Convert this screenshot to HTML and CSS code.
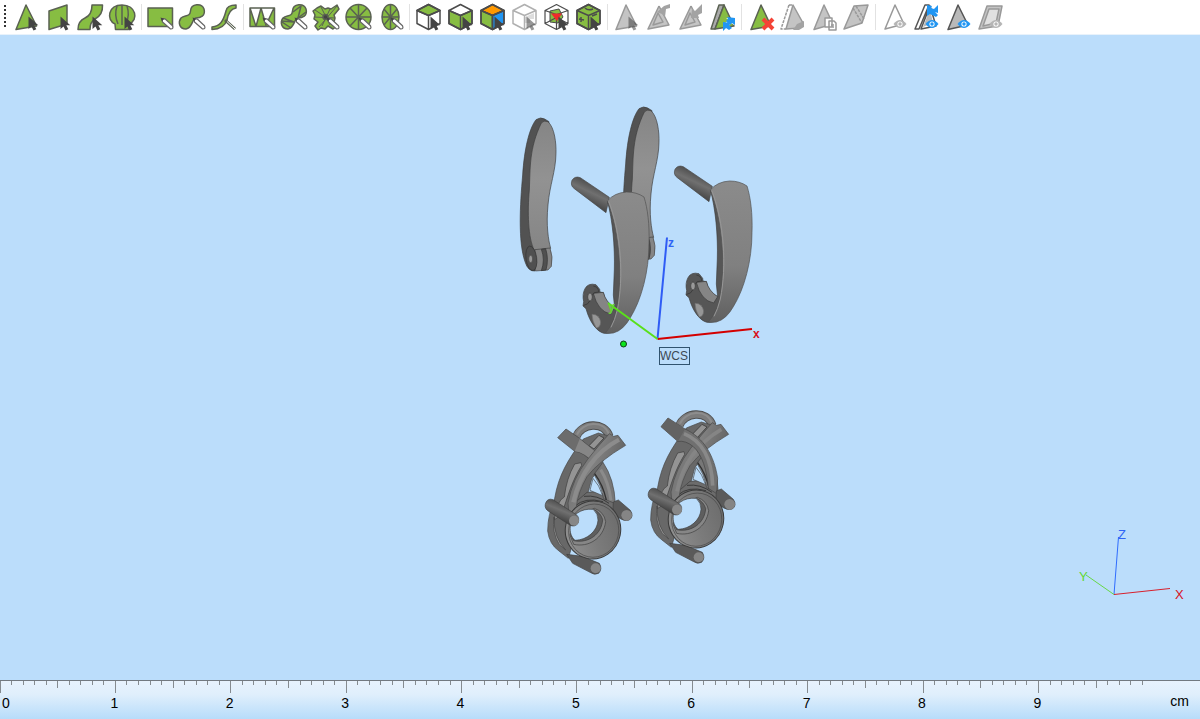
FILE: index.html
```html
<!DOCTYPE html>
<html lang="en">
<head>
<meta charset="utf-8">
<meta name="viewport" content="width=device-width, initial-scale=1">
<title>Model viewport</title>
<link rel="stylesheet" href="styles.css">
</head>
<body>
<svg class="defs" aria-hidden="true">
  <defs>
    <path id="cursor" d="M18.500 16.500v12.500l3-2.500 2 4 2.800-1.300-2-4h4z" fill="#444"/>
    <g id="pencil"><path d="M18 18.500l3.500.7 7 6.500q1.500 3.500-2 3.300l-8-7z" fill="#fff" stroke="#666" stroke-width="1.200"/><path d="M16.500 17.500l4 1.300-2.700 2.500z" fill="#444" stroke="none"/></g>
    <g id="eye"><path d="M15.500 24q6.500-8 13 0-6.500 8-13 0z" fill="currentColor"/><circle cx="22" cy="24" r="2.600" fill="#fff"/><circle cx="22" cy="24" r="1.700" fill="currentColor"/></g>
    <path id="box" d="M5 10.500L16.500 4.500 28 10.500V23.500L16.500 29.500 5 23.500zM5 10.500l11.500 5 11.500-5M16.500 15.500v14" fill="none"/>
    <linearGradient id="face" x1="0" y1="0" x2="0" y2="1"><stop offset="0" stop-color="#858585"/><stop offset=".45" stop-color="#929292"/><stop offset="1" stop-color="#858585"/></linearGradient>
    <linearGradient id="hookface" x1="0" y1="0" x2="0" y2="1"><stop offset="0" stop-color="#8b8b8b"/><stop offset=".6" stop-color="#808080"/><stop offset="1" stop-color="#606060"/></linearGradient>
    <linearGradient id="post" x1=".65" y1=".2" x2=".35" y2=".8"><stop offset="0" stop-color="#4c4c4c"/><stop offset=".4" stop-color="#707070"/><stop offset="1" stop-color="#3c3c3c"/></linearGradient>
    <linearGradient id="cone" x1="0" y1=".8" x2="1" y2=".2"><stop offset="0" stop-color="#929292"/><stop offset=".5" stop-color="#7b7b7b"/><stop offset="1" stop-color="#6b6b6b"/></linearGradient>
    <linearGradient id="band" x1="0" y1="0" x2="1" y2=".5"><stop offset="0" stop-color="#666"/><stop offset=".5" stop-color="#808080"/><stop offset="1" stop-color="#5c5c5c"/></linearGradient>

    <g id="lever" stroke-linejoin="round">
      <path d="M108 74Q122 65 134 72L147 80 98 458Q112 480 105 528 84 530 75 500C54 440 60 330 68 240C73 160 88 100 108 74z" fill="#525252" stroke="#3c3c3c" stroke-width="2"/>
      <path d="M124 84Q131 75 144 80C164 98 169 145 168 175C167 230 149 270 144 330C138 390 145 435 152 460L103 466C84 430 82 350 88 285C91 220 87 160 124 84z" fill="url(#face)" stroke="#3c3c3c" stroke-width="2"/>
      <path d="M105 464L150 459Q160 485 154 514L144 525 106 528z" fill="#858585" stroke="#444" stroke-width="2"/>
      <path d="M124 463l13-2q10 32 1 64l-14 2q12-32 0-64z" fill="#505050" stroke="#333" stroke-width="2"/>
      <ellipse cx="94" cy="490" rx="16" ry="37" fill="#505050" stroke="#333" stroke-width="2" transform="rotate(-8 94 490)"/>
      <ellipse cx="92" cy="492" rx="6" ry="11" fill="#999" stroke="#444" stroke-width="2"/>
    </g>

    <g id="hook" stroke-linejoin="round">
      <path d="M61 53Q45 47 36 61 30 77 43 86L138 158 148 112z" fill="url(#post)" stroke="#484848" stroke-width="2"/>
      <path d="M142 123C158 180 165 260 163 330L160 405 164 443Q136 432 130 398L120 396 119 388 108 374Q84 368 75 386 66 402 71 425L69 438 78 446C90 490 112 515 132 520Q160 522 181 502L192 320 170 170z" fill="#565656" stroke="#3c3c3c" stroke-width="2"/>
      <path d="M142 123Q163 98 200 96 230 96 252 111C263 145 269 195 267 250C267 335 244 420 211 473Q190 511 160 519 138 521 137 518 160 492 170 450C190 350 176 205 142 123z" fill="url(#hookface)" stroke="#505050" stroke-width="2"/>
      <path d="M147 126C183 220 192 350 172 450Q164 482 153 502" fill="none" stroke="#979797" stroke-width="3"/>
      <path d="M100 400L130 397Q137 426 164 443L152 462Q114 455 100 400z" fill="#858585" stroke="#3a3a3a" stroke-width="2"/>
      <path d="M100 378l9 3q8 8 7 15l-13 2-8 10" fill="none" stroke="#333" stroke-width="2"/>
      <ellipse cx="90" cy="411" rx="7" ry="12" fill="#999" stroke="#383838" stroke-width="2"/>
      <path d="M71 436q14-2 18-13" fill="none" stroke="#303030" stroke-width="2"/>
      <path d="M96 463Q117 462 122 486 121 503 109 504 96 484 96 463z" fill="#969696" stroke="#6c6c6c" stroke-width="2"/>
    </g>

    <g id="setting-back" stroke-linejoin="round">
      <path d="M124 95C138 54 208 47 223 94" fill="none" stroke="#505050" stroke-width="25"/>
      <path d="M124 95C138 54 208 47 223 94" fill="none" stroke="#7c7c7c" stroke-width="20"/>
      <path d="M126 89C142 50 206 44 221 86" fill="none" stroke="#8d8d8d" stroke-width="6"/>
      <path d="M145 102L190 84 228 95 200 180 170 222 160 260 100 460 72 438Q43 418 38 378 38 330 59 280C71 210 98 165 145 102z" fill="#686868" stroke="#444" stroke-width="2"/>
      <path d="M156 262Q195 253 238 288L240 320 100 334 112 300z" fill="#6c6c6c" stroke="#3c3c3c" stroke-width="2"/>
      <path d="M147 274Q187 269 222 295M119 304Q150 275 204 290" fill="none" stroke="#3a3a3a" stroke-width="3"/>
      <path d="M119 177L138 173 140 181C110 230 100 270 79 330L58 344Q66 286 88 276 94 221 119 177z" fill="#949494" stroke="#3c3c3c" stroke-width="2"/>
      <path d="M57 336Q56 400 92 435L73 419Q50 382 57 336z" fill="#999" stroke="#444" stroke-width="2"/>
      <path d="M162 122L192 91 207 99 177 132z" fill="#939393" stroke="#444" stroke-width="3"/>
      <path d="M177 208Q200 242 206 281L241 296Q238 222 204 172z" fill="#777" stroke="#444" stroke-width="2"/>
      <path d="M197 194Q221 232 228 286" fill="none" stroke="#8b8b8b" stroke-width="9"/>
      <path d="M179 206Q204 240 214 285" fill="none" stroke="#303030" stroke-width="4"/>
      <path d="M174 220L165 256 203 272Q193 240 174 220z" fill="#bbddfb" stroke="#444" stroke-width="2"/>
    </g>

    <g id="setting-front" stroke-linejoin="round">
      <path d="M235 291L250 285 286 316Q298 334 283 345 269 350 256 341L233 327z" fill="#5a5a5a" stroke="#404040" stroke-width="2"/>
      <circle cx="275" cy="331" r="16" fill="#858585"/>
      <path d="M95 448L142 454 193 475Q203 492 191 505 178 512 165 502L113 475z" fill="#5a5a5a" stroke="#404040" stroke-width="2"/>
      <circle cx="182" cy="490" r="15" fill="#858585"/>
      <ellipse cx="174" cy="375" rx="83" ry="87" transform="rotate(12 174 375)" fill="url(#cone)" stroke="#3a3a3a" stroke-width="3"/>
      <ellipse cx="176" cy="377" rx="75" ry="80" transform="rotate(12 176 377)" fill="none" stroke="#4a4a4a" stroke-width="2"/>
      <path d="M105 390Q114 333 178 310 207 320 212 350C205 401 160 428 116 418z" fill="#868686" stroke="#3c3c3c" stroke-width="2"/>
      <path d="M108 390Q126 323 176 313 198 324 203 344C200 388 160 416 116 407z" fill="#5e5e5e" stroke="#3c3c3c" stroke-width="2"/>
      <path d="M106 363C108 331 136 309 175 313Q190 327 189 346C187 377 158 405 120 406 108 395 104 382 106 363z" fill="#bbddfb" stroke="#3c3c3c" stroke-width="2"/>
      <path d="M54 284Q39 279 33 292 26 307 38 317L104 360Q119 368 129 355 135 338 124 329z" fill="url(#post)" stroke="#404040" stroke-width="2"/>
      <circle cx="117" cy="347" r="15" fill="#878787"/>
    </g>
    <path id="bar-left" d="M93 72L134 100 187 145 177 177Q145 140 119 139L68 98z" fill="#6c6c6c" stroke="#444" stroke-width="2"/>
    <path id="bar-right" d="M223 86L236 94 249 91 272 121Q191 169 156 215 130 260 124 304L102 329 99 294Q112 222 158 163 190 122 223 86z" fill="url(#band)" stroke="#484848" stroke-width="2"/>
  </defs>
</svg>

<header class="toolbar" role="toolbar" aria-label="Selection tools">
  <span class="grip"></span>
  <div class="group">
    <button class="tool green" aria-label="Select triangle"><svg viewBox="0 0 32 35"><path d="M16 5L26.500 26 6 29.500z"/><use href="#cursor"/></svg></button>
    <button class="tool green" aria-label="Select plane"><svg viewBox="0 0 32 35"><path d="M7 11L25 5V24L7 29.500z"/><use href="#cursor"/></svg></button>
    <button class="tool green" aria-label="Select surface"><svg viewBox="0 0 32 35"><path d="M18 5h10.500Q29 15 21 19 16 22 16 29.500H4Q4 21 11 18 18 15 18 5z"/><use href="#cursor"/></svg></button>
    <button class="tool green" aria-label="Select shell"><svg viewBox="0 0 32 35"><path d="M9.500 29.500L9 24C0 20 2 5 16 5S33 20 23 24l-.500 5.500z"/><path d="M11 6q-3 9 1 18M16 5v20M21 6q3 9-1 18" fill="none"/><use href="#cursor"/></svg></button>
  </div>
  <div class="group">
    <button class="tool green" aria-label="Rectangle brush"><svg viewBox="0 0 32 35"><path d="M4 8h24.500v18.500H4z"/><use href="#pencil"/></svg></button>
    <button class="tool green" aria-label="Freeform brush"><svg viewBox="0 0 32 35"><path d="M14.500 11C15 3 26 3 28 9 30 16 24 18 20 18 16 18 17 28 10 29 3 29 2 22 5 18 9 15 14 17 14.500 11z"/><use href="#pencil"/></svg></button>
    <button class="tool green" aria-label="Curve brush"><svg viewBox="0 0 32 35"><path d="M28 5Q19 5 18 11C15 22 12 26 4 27v2.500Q16 29 19 20 21 9 28 8z"/><path d="M17 20l10 9" stroke-width="3"/><path d="M19 21.500l8 7.500" class="white-line"/></svg></button>
  </div>
  <div class="group">
    <button class="tool green" aria-label="Rectangle mesh"><svg viewBox="0 0 32 35"><path d="M4 8h24.500v18.500H4zM4 8l6 18.500L15 8l5 17 8-17"/><use href="#pencil"/></svg></button>
    <button class="tool green" aria-label="Freeform mesh"><svg viewBox="0 0 32 35"><path d="M14.500 11C15 3 26 3 28 9 30 16 24 18 20 18 16 18 17 28 10 29 3 29 2 22 5 18 9 15 14 17 14.500 11z"/><path d="M15 12l8-6-3 12 8-6M3 21l13 1M4 22l9 6M5 18l11 4" fill="none"/><use href="#pencil"/></svg></button>
    <button class="tool green" aria-label="Star mesh"><svg viewBox="0 0 32 35"><path d="M11 6l4 3 3-1 3 1 6-4 2 4-5 6 1 3-1 4 3 4-4 3-5-3-3 3-4-1-3 2-3-4 3-4-4-3 1-4-2-4 4-3z"/><path d="M5 10l21 14M9 27L27 6M4 17l21 1M11 7l9 18M20 9l-8 17" fill="none" stroke-width="1"/><circle cx="15.500" cy="17" r="2.500" fill="#444"/><use href="#pencil"/></svg></button>
    <button class="tool green" aria-label="Circle mesh"><svg viewBox="0 0 32 35"><circle cx="16.500" cy="17" r="12.500"/><path d="M4 17h25M16.500 5v25M8 8l17 18M25 8L8 26"/><use href="#pencil"/></svg></button>
    <button class="tool green" aria-label="Ellipse mesh"><svg viewBox="0 0 32 35"><ellipse cx="16.500" cy="17" rx="8.500" ry="12.500"/><path d="M8 17h17M16.500 5v25M10 9l13 16M23 9L10 25"/><use href="#pencil"/></svg></button>
  </div>
  <div class="group">
    <button class="tool line" aria-label="Top face"><svg viewBox="0 0 32 35"><path class="green-fill" d="M5 10.500l11.500-6 11.500 6-11.500 5z"/><use href="#box"/><use href="#cursor"/></svg></button>
    <button class="tool line" aria-label="Side faces"><svg viewBox="0 0 32 35"><path class="green-fill" d="M5 10.500l11.500 5 11.500-5v13l-11.500 6-11.500-6z"/><use href="#box"/><use href="#cursor"/></svg></button>
    <button class="tool line" aria-label="Color faces"><svg viewBox="0 0 32 35"><path fill="#ff9800" d="M5 10.500l11.500-6 11.500 6-11.500 5z"/><path class="green-fill" d="M5 10.500l11.500 5v14l-11.500-6z"/><path fill="#2196f3" d="M16.500 15.500l11.500-5v13l-11.500 6z"/><use href="#box"/><use href="#cursor"/></svg></button>
    <button class="tool pale" aria-label="Hidden faces"><svg viewBox="0 0 32 35"><path d="M17 17l9-4v6h-4v4h-5z" fill="#ddd" stroke="none"/><use href="#box"/><use class="dim" href="#cursor"/></svg></button>
    <button class="tool line" aria-label="Inner body"><svg viewBox="0 0 32 35"><path d="M10 11l9-2 4 8-5 6-8-1z" class="green-fill" stroke-width="1"/><path d="M5 10.500L16.500 4.500 28 10.500V23.500L16.500 29.500 5 23.500zM5 10.500l11.500 4 11.500-4M5 23.500l11.500-6 11.500 6M16.500 17v12" stroke-width="1.200"/><path d="M11 13.500h11L17 21z" fill="#f02a2a" stroke="none"/><use href="#cursor"/></svg></button>
    <button class="tool line" aria-label="Marked body"><svg viewBox="0 0 32 35"><path class="green-fill" d="M5 10.500l11.500-6 11.500 6v13l-11.500 6-11.500-6z"/><use href="#box"/><path d="M13 8q3 3 8 1M7 19l5 1M9 17v5M20 16l5-2"/><use href="#cursor"/></svg></button>
  </div>
  <div class="group">
    <button class="tool gray" aria-label="Pick triangle"><svg viewBox="0 0 32 35"><path d="M16 5L26.500 26 6 29.500z"/><use class="dim" href="#cursor"/></svg></button>
    <button class="tool gray" aria-label="Extract triangle"><svg viewBox="0 0 32 35"><path d="M17 6L6 29l21-4-10-19M16 13l-5 12 10-3z"/><path d="M15 12l7-6 6-2v4l-4 1-1 8-3-3z" class="dark-gray"/></svg></button>
    <button class="tool gray" aria-label="Insert triangle"><svg viewBox="0 0 32 35"><path d="M17 6L6 29l21-4-10-19M16 13l-5 12 10-3z"/><path d="M17 18l1-9 3 2 7-7v9l-4 2 1 3z" class="dark-gray"/></svg></button>
    <button class="tool green" aria-label="Refresh triangles"><svg viewBox="0 0 32 35"><path d="M13 5L5 29h4L18 5z" fill="#aaa"/><path d="M18 5L9 29l19-3z"/><path d="M20 18h8v7l-3-2-5 6v-3h-3l2-3 4-3z" fill="#fff" stroke="none"/><path d="M21 17l8 1v7l-3-2-2 2-4-4 2-2zM17 22l8 1-2 2 3 3-3 2-3-2-3 3z" class="blue"/></svg></button>
  </div>
  <div class="group">
    <button class="tool green" aria-label="Delete triangle"><svg viewBox="0 0 32 35"><path d="M17 5L27 26 7 29.500z"/><path d="M19 19l10 10M29 19L19 29" class="cross"/></svg></button>
    <button class="tool gray" aria-label="Offset triangle"><svg viewBox="0 0 32 35"><path d="M13 5L5 29h5M13 5h4" stroke-dasharray="3 1" fill="none"/><path d="M17 5l10 18-3 5-14 1z"/><path d="M17 30l4-6 7-3v6l-5 3z" class="dark-gray"/></svg></button>
    <button class="tool gray" aria-label="Copy triangle"><svg viewBox="0 0 32 35"><path d="M16 5l9 19L6 29.500z"/><path d="M17 18h7v9h-7zM21 21h5l2 2v7h-7zM23 25h3M23 27h3" fill="#fff"/></svg></button>
    <button class="tool gray" aria-label="Split plane"><svg viewBox="0 0 32 35"><path d="M14 6l14-1-6 18-18 6z"/><path d="M13 8l9 15M16 6l8 13" stroke-dasharray="3 1"/></svg></button>
  </div>
  <div class="group">
    <button class="tool gray" aria-label="Show outline"><svg viewBox="0 0 32 35"><path d="M17 5l9 19L7 29z" fill="#fff"/><use href="#eye"/></svg></button>
    <button class="tool shade" aria-label="Swap visibility"><svg viewBox="0 0 32 35"><path d="M15 5L5 29h4L19 5zM20 6l-9 23 15-3z" fill="#fff"/><path d="M20 9l-7 18 10-4z" stroke="none"/><path d="M17 5l5 1-1 2 3 1 4-4v8l-3-1 3 3-2 2-6-3-3 2z" class="blue"/><use class="blue-eye" href="#eye"/></svg></button>
    <button class="tool shade" aria-label="Show solid"><svg viewBox="0 0 32 35"><path d="M16 5l10 20L6 29.500z"/><use class="blue-eye" href="#eye"/></svg></button>
    <button class="tool gray" aria-label="Show plane"><svg viewBox="0 0 32 35"><path d="M13 6h15l-4 20-19 3z"/><path d="M15 9h10l-3 14-13 3z" fill="#e0e0e0"/><use href="#eye"/></svg></button>
  </div>
</header>

<main class="viewport">
  <svg class="scene" viewBox="0 35 1200 645" role="img" aria-label="Earring parts in 3D view">
    <g transform="translate(500 95) scale(.33333)"><use href="#lever"/><use href="#lever" x="309" y="-33"/></g>
    <g transform="translate(560 160) scale(.33333)"><use href="#hook"/><use href="#hook" x="309" y="-33"/></g>
    <g transform="translate(535 405) scale(.33333)">
      <use href="#setting-back"/>
      <use href="#bar-left"/>
      <path d="M119 139L134 102 187 145 178 174Q148 142 119 139" fill="#868686"/>
      <use href="#bar-right"/>
      <path d="M252 104C182 141 134 208 115 292" fill="none" stroke="#8c8c8c" stroke-width="13"/>
      <use href="#setting-front"/>
      <g transform="translate(309 -33)">
        <use href="#setting-back"/>
        <use href="#bar-right"/>
        <path d="M250 106C184 145 134 208 117 292" fill="none" stroke="#858585" stroke-width="11"/>
        <path d="M90 72L141 105C197 130 229 186 239 253L236 299 211 283C207 228 192 181 166 158Q144 139 119 142L69 98z" fill="#707070" stroke="#444" stroke-width="2"/>
        <path d="M138 119C190 140 221 187 224 275" fill="none" stroke="#898989" stroke-width="11"/>
        <path d="M90 72L141 105 120 142 69 98z" fill="#636363"/>
        <use href="#setting-front"/>
      </g>
    </g>
    <g class="axes">
      <path d="M657.500 339L667 237.500" stroke="#2f5cf5"/>
      <path d="M657.500 339L752 329" stroke="#d40000"/>
      <path d="M657.500 339L608 303" stroke="#59e01a"/>
    </g>
    <circle cx="623.500" cy="344" r="3" fill="#0be51c" stroke="#123d16"/>
    <text class="axis-label blue-text" x="668" y="247">z</text>
    <text class="axis-label red-text" x="753" y="338">x</text>
    <text class="axis-label green-text" x="608" y="311">y</text>
    <rect x="659.500" y="347.500" width="30" height="17" fill="none" stroke="#30536f"/>
    <text class="origin" x="660" y="360">WCS</text>
    <g class="axes compass">
      <path d="M1114 594.500L1118.500 537" stroke="#2f6cff"/>
      <path d="M1114 594.500L1170 588.500" stroke="#d8202c"/>
      <path d="M1114 594.500L1086 575" stroke="#67d846"/>
    </g>
    <text class="compass-label blue-text" x="1118" y="539">Z</text>
    <text class="compass-label red-text" x="1175" y="599">X</text>
    <text class="compass-label green-text" x="1079" y="581">Y</text>
  </svg>
</main>

<footer class="ruler">
  <svg class="ticks" viewBox="0 0 104 12" preserveAspectRatio="none" aria-hidden="true">
    <defs>
      <path id="cm" d="M0 0v12M1 0v4M2 0v4M3 0v4M4 0v4M5 0v7M6 0v4M7 0v4M8 0v4M9 0v4" vector-effect="non-scaling-stroke"/>
    </defs>
    <use href="#cm"/><use href="#cm" x="10"/><use href="#cm" x="20"/><use href="#cm" x="30"/><use href="#cm" x="40"/><use href="#cm" x="50"/><use href="#cm" x="60"/><use href="#cm" x="70"/><use href="#cm" x="80"/><use href="#cm" x="90"/>
  </svg>
  <div class="numbers">
    <span class="origin-number">0</span><span>1</span><span>2</span><span>3</span><span>4</span><span>5</span><span>6</span><span>7</span><span>8</span><span>9</span>
    <span class="unit">cm</span>
  </div>
</footer>
</body>
</html>
```
FILE: styles.css
```css
* {
  box-sizing: border-box;
}

body {
  margin: 0;
  min-height: 100vh;
  display: flex;
  flex-direction: column;
  background: #bbddfb;
  font-family: "Liberation Sans", Arial, sans-serif;
}

.defs {
  position: absolute;
  width: 0;
  height: 0;
}

.toolbar {
  display: flex;
  height: 35px;
  background: #fff;
  border-bottom: 1px solid #e8f2fb;
  overflow: hidden;
}

.grip {
  flex: none;
  width: 2px;
  height: 24px;
  margin: 5px 4px 0;
  background: repeating-linear-gradient(#333 0 2px, #fff 2px 4px);
}

.group {
  display: flex;
  flex: none;
}

.group + .group::before {
  content: "";
  width: 1px;
  height: 26px;
  margin: 4px 2px 0 3px;
  background: #e2e2e2;
}

.tool {
  width: 32px;
  height: 35px;
  padding: 0;
  border: 0;
  background: none;
}

.tool svg {
  display: block;
  width: 32px;
  height: 35px;
  stroke: #5a6152;
  stroke-width: 1.5px;
  stroke-linejoin: round;
}

.tool use[href="#cursor"] {
  stroke: none;
}

.green svg,
.green-fill {
  fill: #87bd42;
}

.line svg {
  fill: none;
  stroke: #4c4c4c;
}

.pale svg {
  fill: none;
  stroke: #b0b0b0;
}

.gray svg {
  color: #b5b5b5;
  fill: #c4c4c4;
  stroke: #999;
}

.shade svg {
  fill: #b9b9b9;
  stroke: #555;
}

.tool use[href="#eye"] {
  stroke: none;
}

.tool .blue-eye {
  color: #2196f3;
}

.dim {
  opacity: .55;
}

.white-line {
  stroke: #fff;
  stroke-width: 1px;
}

.dark-gray {
  fill: #a3a3a3;
  stroke: none;
}

.blue {
  fill: #2196f3;
  stroke: none;
}

.cross {
  stroke: #f44336;
  stroke-width: 4px;
}

.viewport {
  display: flex;
  flex: 1;
  min-height: 0;
}

.scene {
  display: block;
  width: 100%;
  height: auto;
}

.axes {
  fill: none;
  stroke-width: 2px;
}

.compass {
  stroke-width: 1px;
}

.axis-label {
  font: bold 12px "Liberation Sans", Arial, sans-serif;
}

.compass-label {
  font-size: 13px;
}

.blue-text {
  fill: #2f64f5;
}

.red-text {
  fill: #d8101c;
}

.green-text {
  fill: #62d832;
}

.origin {
  font-size: 12px;
  fill: #3c4954;
}

.ruler {
  height: 39px;
  border-top: 1px solid #727980;
  background: linear-gradient(#e7f2fd, #e0effc 35%, #b7dcfa);
}

.ticks {
  display: block;
  width: 100%;
  height: 12px;
  fill: none;
  stroke: #858b90;
  stroke-width: 1px;
  shape-rendering: crispEdges;
}

.numbers {
  display: grid;
  grid-template-columns: repeat(10, 10fr) 4fr;
  padding-top: 2px;
  font-size: 14px;
  line-height: 16px;
  color: #000;
}

.numbers span {
  margin-left: -5px;
}

.numbers .origin-number {
  margin-left: 2px;
}

.numbers .unit {
  margin: -2px 11px 0 0;
  text-align: right;
}
```
